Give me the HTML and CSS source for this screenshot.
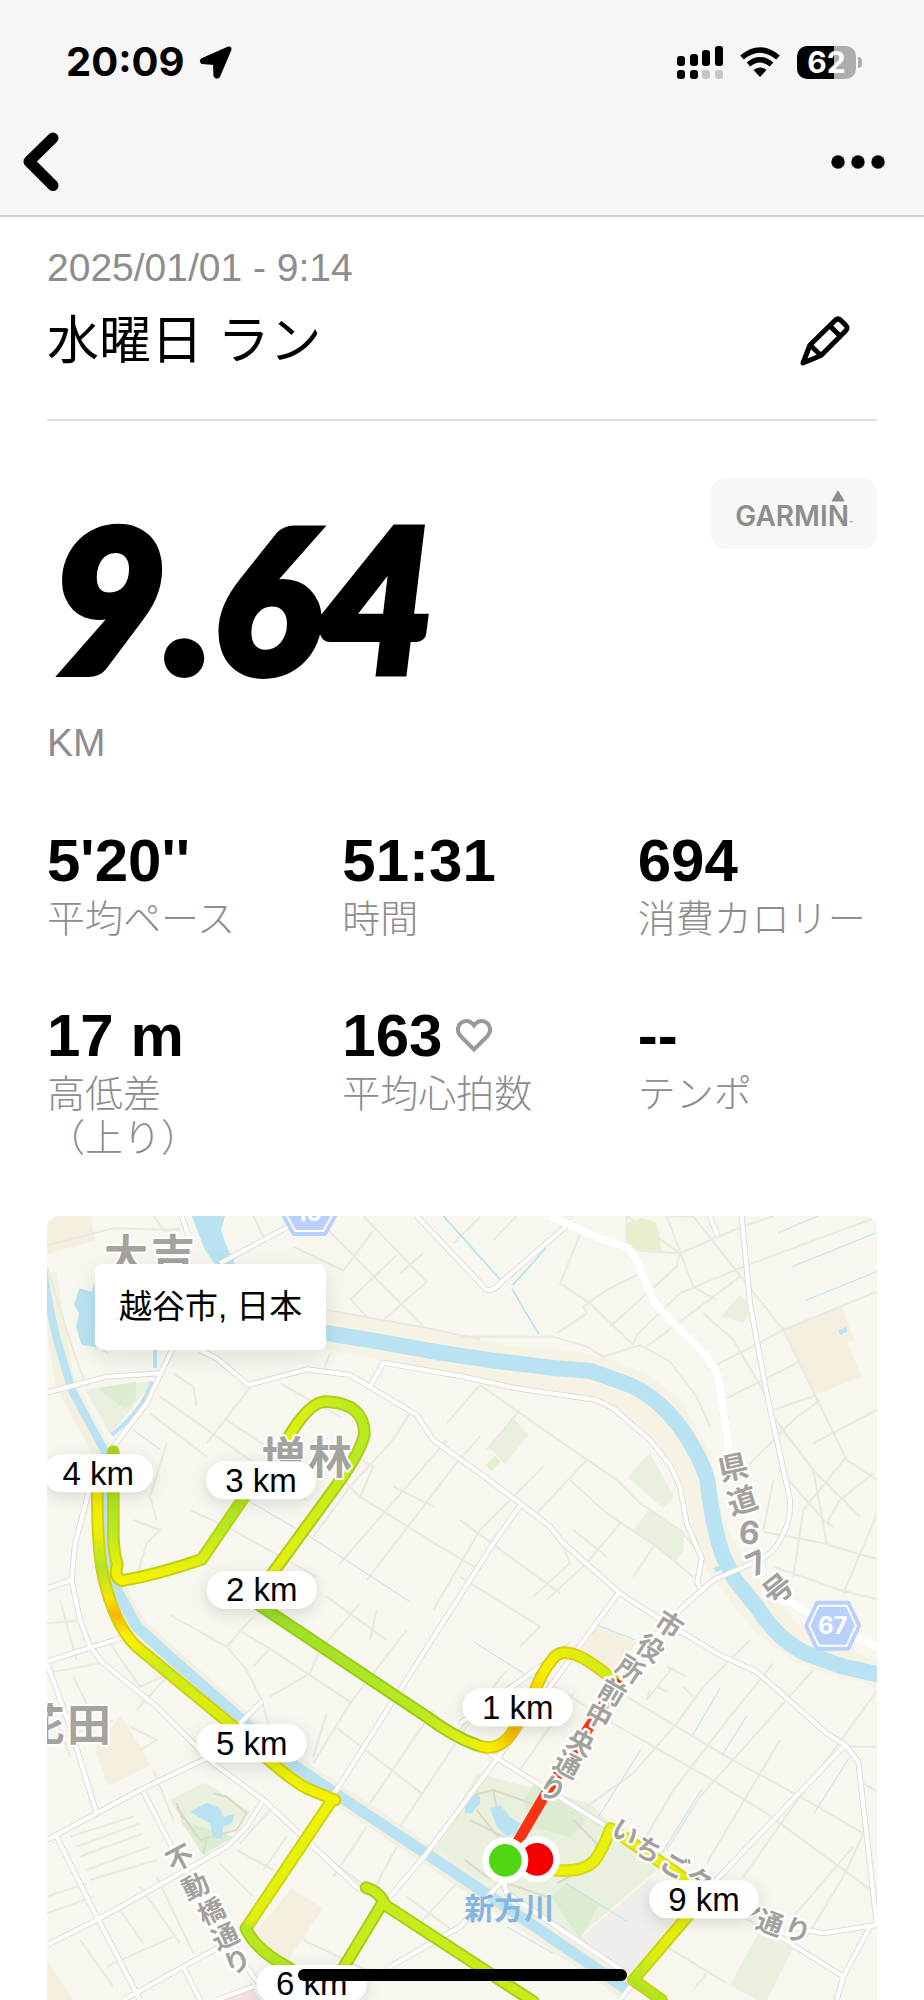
FILE: index.html
```html
<!DOCTYPE html>
<html lang="ja">
<head>
    <meta charset="UTF-8">
    <meta name="viewport" content="width=device-width, initial-scale=1.0">
    <title>水曜日 ラン</title>
    <link rel="stylesheet" href="styles.css">
</head>
<body>

    <!-- Status bar + navigation -->
    <header class="top">
        <div class="status-bar">
            <div class="status-left">
                <span class="clock">20:09</span>
                <svg width="33" height="33" viewBox="0 0 33 33"><path d="M29.500 1.500 L2.500 13.500 Q1 15.500 3 17 L15 18 L15.500 30 Q17.500 33 20 30.500 L31.500 3.500 Q31.500 1 29.500 1.500Z" fill="#000" stroke="#000" stroke-width="2" stroke-linejoin="round"/></svg>
            </div>
            <div class="status-right">
                <svg class="signal" width="46" height="33" viewBox="0 0 46 33">
                    <rect x="0" y="10" width="8" height="10" rx="3"/>
                    <rect x="13" y="8" width="8" height="12" rx="3"/>
                    <rect x="25" y="4" width="8" height="16" rx="3"/>
                    <rect x="38" y="0" width="8" height="20" rx="3"/>
                    <rect x="0" y="24" width="8" height="9" rx="3"/>
                    <rect x="13" y="24" width="8" height="9" rx="3"/>
                    <rect x="25" y="24" width="8" height="9" rx="3" fill="#c6c6c6"/>
                    <rect x="38" y="24" width="8" height="9" rx="3" fill="#c6c6c6"/>
                </svg>
                <svg class="wifi" width="40" height="30" viewBox="0 0 40 30">
                    <g fill="none" stroke="#000" stroke-width="5.500">
                        <path d="M2 10.500 Q20 -4.500 38 10.500"/>
                        <path d="M8.500 17.500 Q20 8 31.500 17.500"/>
                    </g>
                    <path d="M13.500 23 Q20 18 26.500 23 L20 30Z"/>
                </svg>
                <div class="battery"><span>62</span></div>
            </div>
        </div>
        <nav class="nav-bar">
            <button class="icon-btn" type="button" aria-label="戻る">
                <svg width="36" height="60" viewBox="0 0 36 60"><path d="M30 6 L6 29.500 L30 53.500" fill="none" stroke="#000" stroke-width="11" stroke-linecap="round" stroke-linejoin="round"/></svg>
            </button>
            <button class="icon-btn" type="button" aria-label="メニュー">
                <svg width="54" height="14" viewBox="0 0 54 14"><circle cx="7" cy="7" r="6.700"/><circle cx="27" cy="7" r="6.700"/><circle cx="47" cy="7" r="6.700"/></svg>
            </button>
        </nav>
    </header>

    <main>
        <!-- Run title -->
        <section class="run-title">
            <p class="muted">2025/01/01 - 9:14</p>
            <div class="title-row">
                <h1>水曜日 ラン</h1>
                <button class="icon-btn" type="button" aria-label="編集">
                    <svg width="50" height="50" viewBox="0 0 50 50" fill="none" stroke="#000" stroke-width="5" stroke-linejoin="round">
                        <path d="M3 47 L10 29 L35 4.500 Q38 1.500 41 4.500 L45.500 9 Q48.500 12 45.500 15 L21 39.500Z"/>
                        <path d="M30 10 L40 20 M10 29 L21 39.500"/>
                    </svg>
                </button>
            </div>
        </section>

        <!-- Distance -->
        <section class="distance">
            <div class="distance-row">
                <div class="distance-value">9.64</div>
                <div class="source">
                    <svg class="source-mark" width="14" height="12" viewBox="0 0 14 12"><path d="M7 1 L13 11 H1Z" fill="#8d8d8d" stroke="#8d8d8d" stroke-linejoin="round"/></svg>
                    <span>GARMIN<small>™</small></span>
                </div>
            </div>
            <p class="muted">KM</p>
        </section>

        <!-- Stats -->
        <dl class="stats">
            <div><dd>5'20''</dd><dt>平均ペース</dt></div>
            <div><dd>51:31</dd><dt>時間</dt></div>
            <div><dd>694</dd><dt>消費カロリー</dt></div>
            <div><dd>17 m</dd><dt>高低差<br>（上り）</dt></div>
            <div>
                <dd>163
                    <svg width="36" height="33" viewBox="0 0 36 33"><path d="M18 30.500 L4.500 17 C0 12 2 5 6.500 3 C11 1 15 2.500 18 6.500 C21 2.500 25 1 29.500 3 C34 5 36 12 31.500 17Z" fill="none" stroke="#999" stroke-width="4"/></svg>
                </dd>
                <dt>平均心拍数</dt>
            </div>
            <div><dd>--</dd><dt>テンポ</dt></div>
        </dl>

        <!-- Map, 3 units per pixel -->
        <section class="map">
            <svg class="map-canvas" viewBox="21 18 2490 2352" preserveAspectRatio="xMidYMin slice">
                <defs>
                    <linearGradient id="g-1km" gradientUnits="userSpaceOnUse" x1="1340" y1="1600" x2="1720" y2="1380">
                        <stop offset="0" stop-color="#f7ef00"/><stop offset=".2" stop-color="#f9b40a"/><stop offset=".6" stop-color="#f7ef00"/><stop offset="1" stop-color="#cdeb16"/>
                    </linearGradient>
                    <linearGradient id="g-2km" gradientUnits="userSpaceOnUse" x1="700" y1="1200" x2="1330" y2="1620">
                        <stop offset="0" stop-color="#9ade28"/><stop offset=".7" stop-color="#b9ea20"/><stop offset="1" stop-color="#f2ef08"/>
                    </linearGradient>
                    <linearGradient id="g-3km" gradientUnits="userSpaceOnUse" x1="740" y1="0" x2="960" y2="0">
                        <stop offset="0" stop-color="#e0ee10"/><stop offset="1" stop-color="#b9ea20"/>
                    </linearGradient>
                    <linearGradient id="g-4km" gradientUnits="userSpaceOnUse" x1="0" y1="720" x2="0" y2="1110">
                        <stop offset="0" stop-color="#a5d420"/><stop offset=".6" stop-color="#b4ea22"/><stop offset="1" stop-color="#f7f200"/>
                    </linearGradient>
                    <linearGradient id="g-5km" gradientUnits="userSpaceOnUse" x1="0" y1="850" x2="0" y2="1780">
                        <stop offset="0" stop-color="#f2ea04"/><stop offset=".12" stop-color="#eef008"/><stop offset=".24" stop-color="#b0e524"/><stop offset=".34" stop-color="#f5e408"/><stop offset=".39" stop-color="#fbb200"/><stop offset=".46" stop-color="#fbf000"/><stop offset=".56" stop-color="#cdec16"/><stop offset="1" stop-color="#f4f200"/>
                    </linearGradient>
                    <linearGradient id="g-6km" gradientUnits="userSpaceOnUse" x1="0" y1="1780" x2="0" y2="2170">
                        <stop offset="0" stop-color="#eff204"/><stop offset=".9" stop-color="#dcef10"/><stop offset="1" stop-color="#9fe026"/>
                    </linearGradient>
                    <linearGradient id="g-9km" gradientUnits="userSpaceOnUse" x1="1960" y1="2100" x2="1780" y2="2320">
                        <stop offset="0" stop-color="#eef004"/><stop offset=".6" stop-color="#dcee10"/><stop offset="1" stop-color="#aee422"/>
                    </linearGradient>

                    <!-- run route, one path per split -->
                    <path id="s1" d="M1720 1410 Q1580 1290 1540 1345 Q1500 1390 1475 1470 L1415 1570 Q1370 1635 1300 1600"/>
                    <path id="s2" d="M1310 1605 Q1240 1580 1160 1520 L650 1180"/>
                    <path id="s3" d="M690 1100 L880 840 Q960 730 973 675 Q975 580 860 575 Q810 570 740 690"/>
                    <path id="s4" d="M620 850 L485 1048 Q350 1095 245 1112 Q220 1100 232 1065 Q220 1020 220 970 V725"/>
                    <path id="s5" d="M172 850 Q172 1020 190 1100 Q225 1250 290 1310 L580 1550 Q720 1690 800 1735 L885 1770"/>
                    <path id="s6" d="M868 1782 L618 2155"/>
                    <path id="s6b" d="M618 2155 Q645 2220 750 2275"/>
                    <path id="s7" d="M900 2290 L1030 2075 M978 2033 Q1020 2045 1035 2085 L1480 2375"/>
                    <path id="s8" d="M1950 2110 L1780 2310 L1865 2370"/>
                    <path id="s9" d="M1540 1980 Q1630 1990 1665 1950 Q1690 1915 1712 1855 L1940 2010"/>
                </defs>

                <!-- land use -->
                <g fill="#f5efe0">
                    <path d="M21 18 H150 L165 92 L21 132Z"/>
                    <path d="M2230 358 L2405 290 L2443 390 L2422 400 L2466 500 L2328 553Z"/>
                    <path d="M165 1620 L240 1515 L333 1665 L205 1728Z"/>
                    <path d="M645 2170 L755 2035 L848 2095 L735 2265Z"/>
                    <path d="M1600 1325 L1665 1240 L1790 1300 L1725 1380Z"/>
                    <path d="M21 2250 L100 2370 H21Z"/>
                </g>
                <path d="M560 2370 L630 2325 L660 2370Z" fill="#f5e2dc"/>
                <path d="M1620 2185 L1830 2005 L1930 2100 L1770 2290Z" fill="#efeeea"/>
                <g fill="#e9f0de">
                    <path d="M135 540 L340 512 L212 672Z"/>
                    <path d="M390 1770 L495 1718 L632 1805 L490 1935Z"/>
                    <path d="M1310 1690 L1650 1780 L1850 1980 L1610 2185 L1390 2045 L1180 1925Z"/>
                    <path d="M1345 710 L1420 625 L1465 675 L1395 762Z"/>
                    <path d="M1762 800 L1830 730 L1902 860 L1870 895Z"/>
                    <path d="M1782 958 L1830 895 L1930 970 L1930 1020 L1905 1058Z"/>
                    <path d="M2042 320 L2100 255 L2135 295 L2110 338Z"/>
                    <path d="M2070 2325 L2155 2170 L2260 2215 L2180 2370H2150Z"/>
                </g>
                <g fill="#dbecd0">
                    <path d="M170 535 L290 515 L285 570 L255 598Z"/>
                    <path d="M1450 1770 L1485 1720 L1640 1830 L1590 1880 L1470 1850Z"/>
                    <path d="M1535 2060 L1580 2020 L1680 2080 L1620 2188Z"/>
                    <path d="M420 1830 L490 1935 L580 1880Z"/>
                </g>
                <path d="M1758 40 L1807 25 L1850 38 L1867 125 L1758 118Z M1337 765 L1365 738 L1382 755 L1355 782Z" fill="#e6f1cc"/>

                <!-- river banks -->
                <path d="M860 300 L1260 380 L1460 415 L1600 420 L1690 440 L1830 495 L1925 575 L2010 730 L2050 930 L2130 1080 L2270 1240 L2520 1360 V1435 L2270 1360 L2150 1270 L2090 1200 L2000 1080 L1960 960 L1900 760 L1790 640 L1670 570 L1430 535 L1260 490 L860 420Z" fill="#f6f3e5"/>
                <path d="M21 190 L75 520 L195 740 L200 1050 L245 1170 L290 1250 L600 1525 L760 1665 L1150 1925 L1760 2340" fill="none" stroke="#f4f0e0" stroke-width="58"/>

                <!-- minor roads -->
                <g class="minor">
                    <path d="M21 170 L60 300 L110 450 L140 530 M21 105 L220 55 L420 60 M340 18 L375 65 L420 55 M640 18 L680 100 M760 110 L910 182 L1000 60 M850 45 L1150 350 M930 270 L1070 135 M935 272 L980 320 M1080 190 L1150 130 M860 300 L1140 350 L1320 388 M970 18 L1160 215 L1030 330 M1240 100 L1320 20"/>
                    <path d="M400 490 L460 530 L470 590 M330 610 L500 740 M360 560 L800 870 M560 630 L740 750 M720 520 L900 620 M870 430 L850 480 M640 520 L500 700 M450 900 L560 950 L830 1100 M280 930 L360 960 L320 1000 L280 1130 M380 700 L330 860 L350 930 M820 980 L930 830 L1050 700 L1110 610 M900 1060 L1100 830 L1220 690 M980 1110 L1150 890 L1240 770 L1320 680 M900 800 L960 860 L1000 770 L930 730 M1060 830 L1180 890 M960 860 L1200 1010 L1320 1080"/>
                    <path d="M1430 18 L1360 90 M1620 75 L1560 220 L1650 280 L1780 405 M1550 370 L1640 310 L1630 290 L1700 240 L1790 195 M1710 350 L1910 170 L1920 130 L1760 18 V120 L1920 130 M1880 18 L1960 230 L2030 270 M1920 130 L2080 60 L2200 18 M1780 405 L1790 375 L1920 250 L2110 170 L2500 25 M1820 410 L2100 200 M1890 18 L1960 20 L2230 360 M1990 310 L2080 390 L2180 560 M2060 565 L2280 455 M2000 480 L2230 360 L2510 245 M2200 600 L2330 555 M2230 360 L2420 750 L2520 815 M2120 770 L2260 630 L2340 570 M2200 620 L2320 780 L2360 1000 M2320 700 L2510 600 M2220 650 L2320 780 L2460 920 M2170 960 L2200 810 M2170 965 L2350 1000 L2520 1050 M2260 1100 L2290 900 L2420 740 M2360 940 L2400 870 L2500 790 M2220 780 L2350 930 L2380 950 M2410 1150 L2520 890 M2200 1070 L2400 1140 L2520 1170"/>
                    <path d="M1260 380 H1540 L1640 410 L1690 440 L1800 405 L1890 455 L1970 560 L2010 650 M1320 525 L1570 700 L1730 810 L1800 880 L1920 960 L1990 1040 M1320 525 L1220 640 M1440 600 L1340 720 M1510 770 L1320 960 L1180 1200 M1590 810 L1700 910 L1850 1010 L1960 1100 M1640 750 L1490 910 M1740 940 L1640 1060 L1520 1170 M1260 930 L1560 1150 M1550 960 L1590 1060 L1480 1160 M1600 960 L1700 1040 M1840 1010 L1780 1100 M1260 1100 L1500 1250"/>
                    <path d="M390 1215 L560 1310 L620 1380 L665 1470 L690 1560 M595 1260 L680 1310 L930 1475 M560 1310 L640 1220 M690 1460 L810 1390 L840 1320 L960 1180 M885 1550 L1145 1750 M1010 1200 L990 1290 M860 1160 L1040 1290 M820 1660 L930 1480 L1100 1260 M990 1780 L1180 1500 M860 1510 L820 1640 M640 1370 L685 1320 M1080 1850 L1300 1520 M21 1240 L130 1230 M60 1170 L110 1350 M21 1390 L180 1360 M100 1400 L150 1500 M210 1300 L300 1430 L390 1390 M290 1500 L400 1380 M21 1600 L220 1530 M50 1530 L90 1640 M340 1680 L400 1830 M270 1550 L350 1590 L300 1620 M90 1880 L280 1820 M110 1910 L300 1840 M120 1940 L310 1870 M140 1980 L330 1910 M150 2010 L350 1950 M21 2060 L140 2020 M21 2110 L160 2060 M120 2190 L220 2330 M300 2030 L420 2200 M240 2100 L310 2200 M350 2000 L460 2230 M200 2270 L400 2180 M540 1960 L640 2060 M590 1920 L700 1980 M690 1800 L600 1900 M740 1880 L670 1980 M800 1900 L980 2030 M880 2000 L980 1850 M990 2060 L1070 1910 M790 2190 L1000 2290 M1100 2060 L1250 2170 M1130 2150 L1250 2020"/>
                    <path d="M1500 1250 L1440 1310 M1400 1380 L1260 1560 M1600 1450 L1440 1680 M1500 1400 L1700 1530 L2000 1700 L2180 1810 L2520 2060 M1760 1460 L2060 1640 M1900 1370 L1820 1470 L1830 1440 M1910 1540 L1780 1690 L1640 1790 M1910 1540 L1990 1430 L2130 1290 M2200 1360 L2070 1520 L1900 1740 L1800 1910 M2320 1380 L2150 1570 L1980 1760 L1880 1920 M2000 1960 L2220 1590 M2110 2000 L2280 1760 L2520 1430 M2260 2120 L2440 1910 M2060 1640 L2280 1760 L2470 1870 L2410 2000 L2300 2180 M1880 1370 L1940 1400 M1850 1430 L1880 1445 M1930 1430 L1960 1460 M2420 1610 H2510 M2470 1720 L2520 1750 M1880 2210 L2060 2320 M1960 2340 L2000 2290 M2070 2100 L2270 2210"/>
                </g>

                <!-- park paths -->
                <g class="path">
                    <path d="M410 1790 L480 1890 L590 1860 L620 1810 L560 1760 L520 1750 M430 1830 L410 1780 M500 1890 L490 1930"/>
                    <path d="M1240 1825 L1280 1760 L1360 1740 L1370 1800 L1450 1850 M1290 1830 L1430 1900 M1310 1800 L1390 1900 M1600 1830 L1670 1900 V1960 L1550 2020 M1275 1950 L1340 2000 L1520 2060 M1360 1740 L1500 1790"/>
                </g>

                <!-- water -->
                <path d="M455 18 H555 L543 60 L560 110 L585 162 H525 L495 120Z M165 215 V400 L208 432 L160 410 L125 405 L108 350 L118 310 L102 285 L118 235 L155 245Z" fill="#b9e3f3"/>
                <path d="M450 1805 L500 1778 L540 1795 L550 1820 L585 1812 L575 1840 L550 1850 L545 1885 L520 1885 L510 1840Z M1275 1810 Q1270 1760 1300 1750 Q1325 1750 1320 1780 L1295 1810Z M1350 1795 L1380 1785 L1410 1820 L1440 1840 L1430 1870 L1400 1880 L1370 1850Z M2396 360 L2418 350 L2422 365 L2400 374Z M2020 1075 L2060 1055 L2080 1072 L2025 1087Z" fill="#b9e3f3"/>
                <path class="river" d="M840 366 L1000 392 L1200 428 L1360 452 L1480 466 L1550 475 L1650 482 L1770 525 Q1850 560 1920 650 Q1985 745 2002 810 Q2020 960 2050 1040 L2085 1110 L2150 1190 Q2220 1300 2310 1335 L2410 1370 L2520 1395" stroke-width="48"/>
                <path class="river" d="M10 180 Q30 320 60 420 L95 540 L200 735" stroke-width="24"/>
                <path class="river" d="M200 735 V1060 L235 1150 L290 1250 L400 1350 L600 1525 L760 1665 L900 1760 L1150 1925 L1290 2018 L1500 2160 L1770 2345" stroke-width="34"/>
                <path class="river" d="M345 420 V475 M335 515 Q310 600 215 675" stroke-width="12"/>
                <g class="stream">
                    <path d="M1210 18 L1380 208 M1517 115 L1418 225 M1416 235 L1450 295 L1496 372" stroke-width="5"/>
                    <path d="M2215 68 L2335 18 M2257 170 L2510 68 M2295 272 L2510 185 M280 660 L360 718 M500 800 L810 980 L1110 1175 M1300 1295 L1490 1415 M1665 1242 L1785 1290 M2040 1435 L1958 1575 M2120 1518 L2048 1633 M1803 1618 L1675 1820 M1985 1738 L1862 1935 M2430 1640 L2322 1810 M1578 2020 L1762 2135 M1400 2150 L1540 2230" stroke-width="3"/>
                </g>

                <!-- main roads: casing then fill -->
                <g class="casing">
                    <path id="r1" d="M425 18 L445 75 M540 160 L745 50 M400 410 L360 495 L320 580 L220 710 L145 850 L105 1000 L95 1110 L21 1135 M95 1110 L120 1230 L150 1310 L190 1360 L350 1490 L520 1660 L670 1770 L960 2040"/>
                    <path id="r2" d="M21 548 L200 500 L360 490 M480 420 L530 445 L625 525 L800 478 L930 495 L1130 615 L1180 690 L1320 790 L1440 880 L1530 950 L1570 1000 L1740 1150 L1880 1240 L2040 1335 L2150 1385 L2360 1570 L2415 1605 L2455 1655 L2510 2140"/>
                    <path id="r3" d="M990 530 L1030 458 L1260 498 L1430 535 L1670 570 L1720 595 L1830 690 L1890 765 L1920 830 L1940 940 L1985 1045 L1972 1115 L1980 1135"/>
                    <path id="r4" d="M1130 18 L1340 240 Q1360 245 1380 220 L1600 30 M2105 18 L2130 280 L2180 550 L2250 870 Q2255 950 2200 1020 L2170 1045 L2020 1110 L1930 1190 M1260 1540 L1600 1300 M1445 880 L1360 1000 L1080 1440 L880 1755 M1735 1150 L1420 1580 L1160 1930 L1050 2060 M1930 1190 L1830 1290"/>
                    <path id="r5" d="M21 1355 L160 1310 L260 1280 M21 1360 L90 1550 L170 1810 M21 1890 L300 1740 L500 1645 L600 1540 L665 1475 M310 1745 L405 1930 L640 2300 L700 2370 M50 1880 L150 2080 L300 2370 M21 2205 L180 2125 L420 1990 L560 1910 L620 1850 L670 1770 M250 2370 L430 2270 L540 2210 M430 2270 L480 2370 M530 2370 L640 2330 M1050 2270 L1260 2150"/>
                    <path id="r6" d="M1300 1600 L1700 1850 M2415 1605 L2000 2040 L1740 2370 M1260 2150 L1390 2010 L1400 2050 L1760 2290 M2250 2150 L2350 2170 L2510 2145 M2490 2150 L2410 2300 L2390 2370 M2170 2150 L2410 2300 M2010 18 L2033 78"/>
                    <path id="r7" d="M1530 18 L1680 85 L1765 115 L1785 140 L1845 280 L2000 440 L2033 490 L2070 740 M2240 1170 L2330 1225 L2510 1310" stroke-width="24"/>
                </g>
                <g class="road">
                    <use href="#r1"/><use href="#r2"/><use href="#r3"/><use href="#r4"/><use href="#r5"/><use href="#r6"/><use href="#r7"/>
                </g>

                <!-- run route: edge then line -->
                <g class="route-edge">
                    <use href="#s9" stroke="#d6d90e"/>
                    <use href="#s8" stroke="#c9d410"/>
                    <use href="#s1" stroke="#dccc0c"/>
                    <use href="#s2" stroke="#98cc1e"/>
                    <use href="#s3" stroke="#aace1a"/>
                    <use href="#s4" stroke="#c0d012"/>
                    <use href="#s5" stroke="#d3cf0e"/>
                    <use href="#s6" stroke="#cdd60e"/>
                    <use href="#s6b" stroke="#a8ce1a"/>
                    <use href="#s7" stroke="#a8ce1a"/>
                </g>
                <g class="route">
                    <use href="#s9" stroke="#e8f00c"/>
                    <use href="#s8" stroke="url(#g-9km)"/>
                    <use href="#s1" stroke="url(#g-1km)"/>
                    <use href="#s2" stroke="url(#g-2km)"/>
                    <use href="#s3" stroke="url(#g-3km)"/>
                    <use href="#s4" stroke="url(#g-4km)"/>
                    <use href="#s5" stroke="url(#g-5km)"/>
                    <use href="#s6" stroke="url(#g-6km)"/>
                    <use href="#s6b" stroke="#b6e820"/>
                    <use href="#s7" stroke="#c6ec1a"/>
                </g>
                <path d="M1430 1900 L1530 1730 L1740 1410" fill="none" stroke="#fa3314" stroke-width="32"/>

                <!-- place and road names -->
                <g class="place">
                    <text x="258" y="185">大</text><text x="398" y="185">吉</text>
                    <text x="730" y="793">増</text><text x="870" y="793">林</text>
                    <text x="8" y="1593">花</text><text x="147" y="1593">田</text>
                </g>
                <g class="road-name">
                    <g class="large">
                        <text transform="translate(2080 775) rotate(-12)" dy="30">県</text>
                        <text transform="translate(2108 875) rotate(-18)" dy="30">道</text>
                        <text class="digit" transform="translate(2128 968) rotate(5)" dy="34">6</text>
                        <text class="digit" transform="translate(2150 1060) rotate(-25)" dy="34">7</text>
                        <text transform="translate(2215 1140) rotate(-38)" dy="30">号</text>
                    </g>
                    <text transform="translate(1887 1245) rotate(33)" dy="28">市</text>
                    <text transform="translate(1830 1315) rotate(33)" dy="28">役</text>
                    <text transform="translate(1770 1378) rotate(33)" dy="28">所</text>
                    <text transform="translate(1717 1448) rotate(30)" dy="28">前</text>
                    <text transform="translate(1675 1518) rotate(28)" dy="28">中</text>
                    <text transform="translate(1622 1598) rotate(28)" dy="28">央</text>
                    <text transform="translate(1582 1665) rotate(28)" dy="28">通</text>
                    <text transform="translate(1537 1738) rotate(30)" dy="28">り</text>
                    <text transform="translate(420 1945) rotate(-28)" dy="28">不</text>
                    <text transform="translate(467 2030) rotate(-25)" dy="28">動</text>
                    <text transform="translate(515 2105) rotate(-25)" dy="28">橋</text>
                    <text transform="translate(556 2180) rotate(-25)" dy="28">通</text>
                    <text transform="translate(592 2256) rotate(-25)" dy="28">り</text>
                    <text transform="translate(1755 1868) rotate(35)" dy="28">い</text>
                    <text transform="translate(1825 1920) rotate(33)" dy="28">ち</text>
                    <text transform="translate(1902 1968) rotate(30)" dy="28">ご</text>
                    <text transform="translate(1975 2012) rotate(28)" dy="28">タ</text>
                    <text transform="translate(2125 2098) rotate(22)" dy="28">ン</text>
                    <text transform="translate(2190 2140) rotate(20)" dy="28">通</text>
                    <text transform="translate(2272 2162) rotate(18)" dy="28">り</text>
                </g>
                <text class="river-name" x="1408" y="2128">新方川</text>

                <!-- route shields -->
                <g class="shield" transform="translate(2378 1247)">
                    <path class="halo" d="M-45 -66 H45 L76 0 L45 66 H-45 L-76 0Z"/>
                    <path class="sign" d="M-42 -60 H42 L70 0 L42 60 H-42 L-70 0Z"/>
                    <text y="25">67</text>
                </g>
                <g class="shield" transform="translate(808 13)">
                    <path class="halo" d="M-45 -56 H45 L76 0 L45 56 H-45 L-76 0Z"/>
                    <path class="sign" d="M-42 -50 H42 L70 0 L42 50 H-42 L-70 0Z"/>
                    <text y="19">19</text>
                </g>

                <!-- finish and start -->
                <circle class="dot" cx="1491" cy="1948" r="59" fill="#f40000"/>
                <circle class="dot" cx="1396" cy="1951" r="59" fill="#52d613"/>

                <!-- km markers -->
                <g class="km">
                    <g transform="translate(175 790)"><rect x="-165" y="-57" width="330" height="114" rx="57"/><text y="34">4 km</text></g>
                    <g transform="translate(663 811)"><rect x="-165" y="-57" width="330" height="114" rx="57"/><text y="34">3 km</text></g>
                    <g transform="translate(665 1140)"><rect x="-165" y="-57" width="330" height="114" rx="57"/><text y="34">2 km</text></g>
                    <g transform="translate(1433 1492)"><rect x="-165" y="-57" width="330" height="114" rx="57"/><text y="34">1 km</text></g>
                    <g transform="translate(635 1600)"><rect x="-165" y="-57" width="330" height="114" rx="57"/><text y="34">5 km</text></g>
                    <g transform="translate(1992 2068)"><rect x="-165" y="-57" width="330" height="114" rx="57"/><text y="34">9 km</text></g>
                    <g transform="translate(815 2322)"><rect x="-165" y="-57" width="330" height="114" rx="57"/><text y="34">6 km</text></g>
                </g>
            </svg>
            <div class="place-card">越谷市, 日本</div>
        </section>
    </main>

    <div class="home-indicator"></div>

</body>
</html>
```
FILE: styles.css
```css
/* Basic styles */
* {
    box-sizing: border-box;
    margin: 0;
    padding: 0;
}

body {
    font-family: "Liberation Sans", "Noto Sans CJK JP", sans-serif;
    background: #fff;
    color: #000;
    height: 100vh;
    display: flex;
    flex-direction: column;
    overflow: hidden;
}

svg {
    display: block;
}

.icon-btn {
    border: 0;
    background: none;
    cursor: pointer;
}

.muted {
    font-size: 39px;
    line-height: 44px;
    color: #8d8d8d;
}

/* Header */
.top {
    background: #f6f6f6;
    border-bottom: 2px solid #cfcfcf;
    padding-bottom: 16px;
}

.status-bar {
    height: 124px;
    padding: 0 63px 0 66px;
    display: flex;
    align-items: center;
    justify-content: space-between;
}

.status-left,
.status-right {
    display: flex;
    align-items: center;
}

.status-left {
    gap: 15px;
}

.status-right {
    gap: 17px;
}

.clock {
    font: 700 40px/48px Inter, sans-serif;
}

.battery {
    position: relative;
    width: 59px;
    height: 33px;
    margin-right: 5px;
    border-radius: 10px;
    background: linear-gradient(90deg, #000 63%, #adadad 63%);
    color: #fff;
    text-align: center;
    font: 700 30px/33px Inter, sans-serif;
}

.battery::after {
    content: "";
    position: absolute;
    left: 61px;
    top: 11px;
    width: 4px;
    height: 11px;
    border-radius: 0 4px 4px 0;
    background: #adadad;
}

.nav-bar {
    height: 75px;
    padding: 0 39px 0 23px;
    display: flex;
    align-items: center;
    justify-content: space-between;
}

/* Content */
main {
    flex: 1;
    min-height: 0;
    padding: 29px 47px 0;
    display: flex;
    flex-direction: column;
}

.run-title {
    padding-bottom: 46px;
    border-bottom: 2px solid #e1e1e1;
}

.title-row {
    margin-top: 19px;
    padding-right: 27px;
    display: flex;
    align-items: center;
    justify-content: space-between;
}

h1 {
    font-size: 52px;
    line-height: 64px;
    font-weight: 400;
}

.distance {
    margin-top: 57px;
}

.distance-row {
    display: flex;
    align-items: flex-start;
    justify-content: space-between;
}

.distance-value {
    padding: 0 4px 6px;
    font: italic 900 198px/237px Lato, sans-serif;
    -webkit-text-stroke: 8px #000;
}

.source {
    position: relative;
    width: 166px;
    height: 71px;
    padding-top: 22px;
    border-radius: 14px;
    background: #f7f7f7;
    color: #8d8d8d;
    text-align: center;
    font: 600 28px/32px Inter, sans-serif;
}

.source small {
    font-size: 6px;
}

.source-mark {
    position: absolute;
    right: 32px;
    top: 12px;
}

/* Stats */
.stats {
    margin: 59px 0 56px;
    display: grid;
    grid-template-columns: repeat(3, 1fr);
    gap: 58px 56px;
}

.stats div {
    display: flex;
    flex-direction: column;
}

dd {
    display: flex;
    align-items: center;
    gap: 14px;
    font-size: 60px;
    line-height: 73px;
    font-weight: 700;
    white-space: nowrap;
}

dt {
    font-size: 38px;
    line-height: 44px;
    font-weight: 300;
    color: #8d8d8d;
    white-space: nowrap;
}

/* Map */
.map {
    position: relative;
    flex: 1;
    min-height: 0;
    border-radius: 12px 12px 0 0;
    background: #f7f6ef;
    overflow: hidden;
}

.map-canvas {
    width: 100%;
    height: 100%;
}

.map-canvas text {
    text-anchor: middle;
    paint-order: stroke;
    stroke-linejoin: round;
}

.minor {
    fill: none;
    stroke: #eae8e1;
    stroke-width: 6px;
}

.path {
    fill: none;
    stroke: #dcd8c8;
    stroke-width: 6px;
}

.river,
.stream {
    fill: none;
    stroke: #b9e3f3;
    stroke-linejoin: round;
}

.casing {
    fill: none;
    stroke: #dfdcd6;
    stroke-width: 18px;
    stroke-linejoin: round;
}

.road {
    fill: none;
    stroke: #fff;
    stroke-width: 12px;
    stroke-linejoin: round;
}

.route-edge,
.route {
    fill: none;
    stroke-linecap: round;
    stroke-linejoin: round;
}

.route-edge {
    stroke-width: 38px;
}

.route {
    stroke-width: 26px;
}

.place text {
    font-size: 132px;
    font-weight: 700;
    fill: #a5a39e;
    stroke: #fff;
    stroke-width: 12px;
}

.road-name text {
    font-size: 80px;
    font-weight: 700;
    fill: #a3a19c;
    stroke: #fff;
    stroke-width: 14px;
}

.road-name .large text {
    font-size: 90px;
}

.road-name .large .digit {
    font-family: Inter, sans-serif;
    font-size: 96px;
}

.river-name {
    font-size: 90px;
    font-weight: 700;
    fill: #86b5e0;
}

.shield .halo {
    fill: #b8d0fb;
    stroke: #b8d0fb;
    stroke-width: 18px;
    stroke-linejoin: round;
}

.shield .sign {
    fill: #b8d0fb;
    stroke: #fff;
    stroke-width: 6px;
    stroke-linejoin: round;
}

.shield text {
    font: 700 72px Inter, sans-serif;
    fill: #fff;
}

.dot {
    stroke: #fff;
    stroke-width: 20px;
}

.km rect {
    fill: #fff;
    filter: drop-shadow(0 12px 24px rgba(0, 0, 0, 0.12));
}

.km text {
    font-size: 99px;
    fill: #000;
}

.place-card {
    position: absolute;
    left: 48px;
    top: 48px;
    padding: 20px 24px;
    border-radius: 8px;
    background: #fff;
    box-shadow: 0 6px 24px rgba(0, 0, 0, 0.1);
    font-size: 33px;
    line-height: 46px;
}

.home-indicator {
    position: fixed;
    left: 50%;
    bottom: 19px;
    width: 329px;
    height: 12px;
    margin-left: -164px;
    border-radius: 6px;
    background: #000;
}
```
